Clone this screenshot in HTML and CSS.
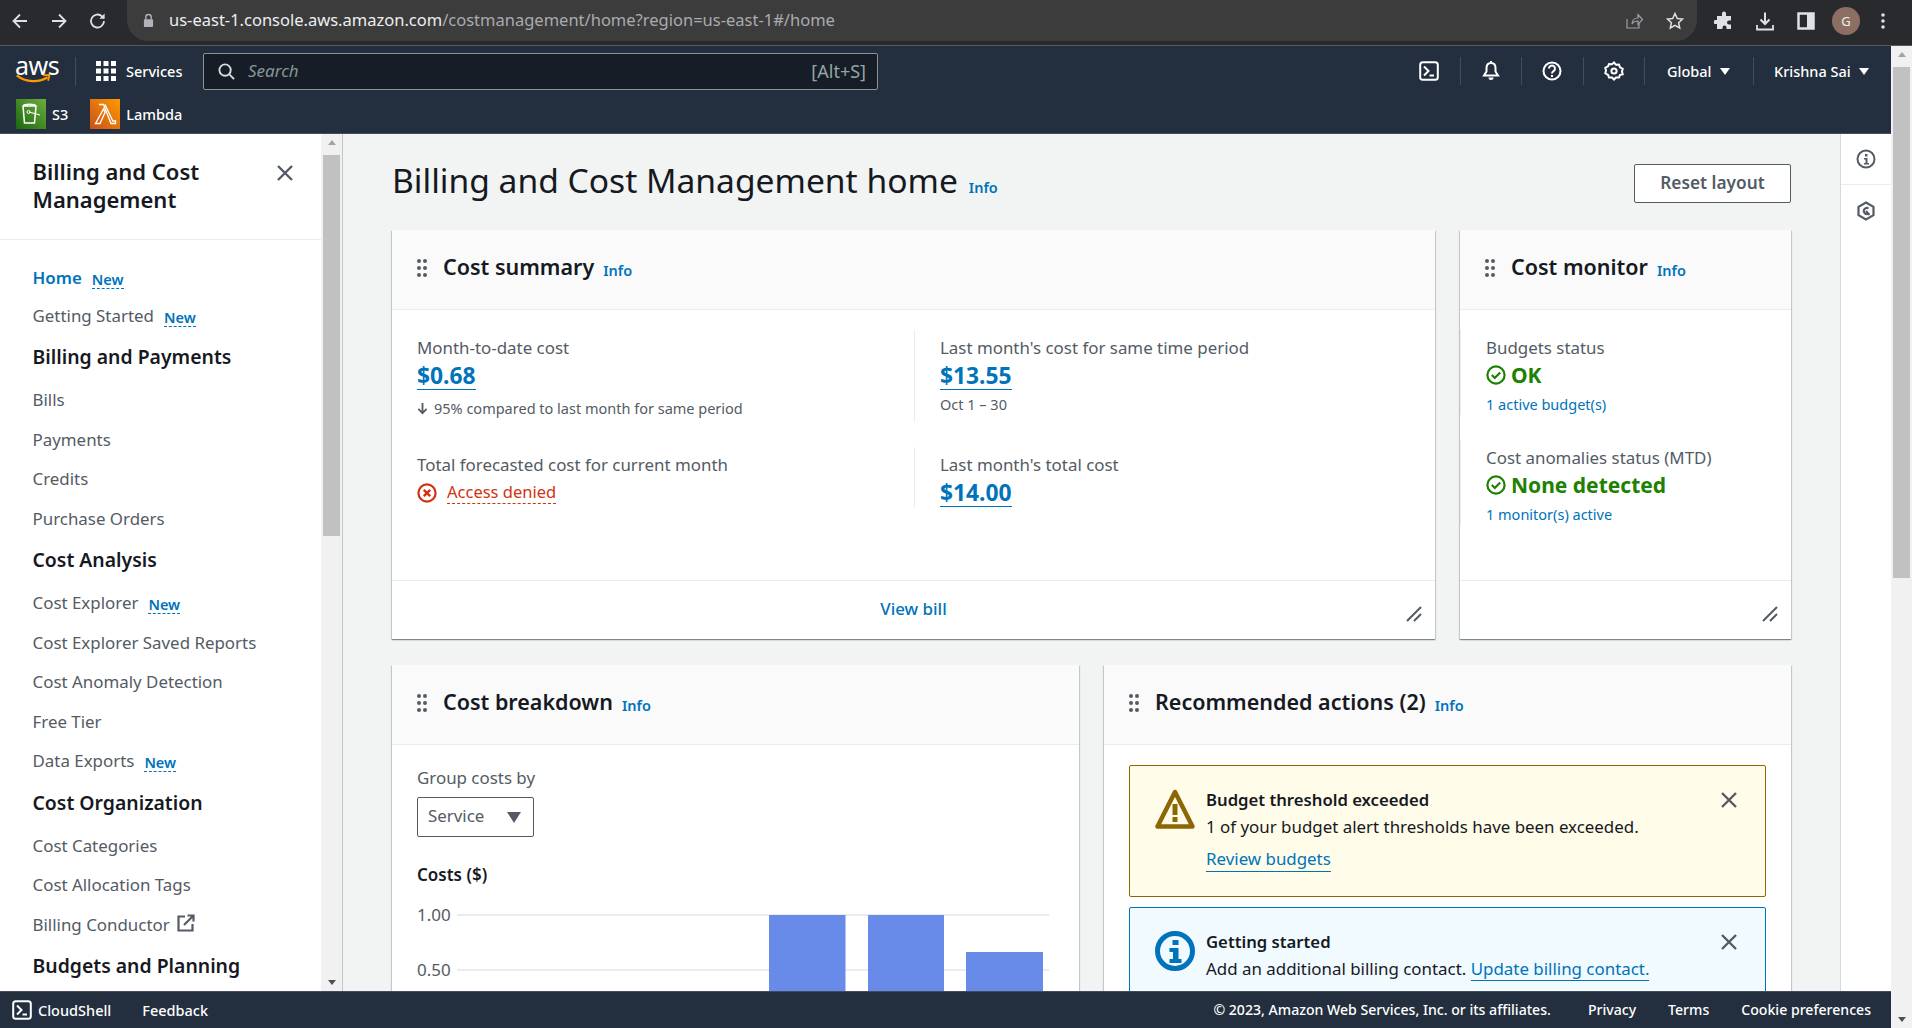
FILE: index.html
```html
<!DOCTYPE html>
<html lang="en">
<head>
<meta charset="utf-8">
<title>Billing and Cost Management home</title>
<link rel="stylesheet" href="styles.css">
</head>
<body>
<svg class="sprite" aria-hidden="true">
  <symbol id="i-shell" viewBox="0 0 20 20"><rect x="1.2" y="1.2" width="17.6" height="17.6" rx="2.5" fill="none" stroke="currentColor" stroke-width="2"/><path d="M5 5.5l4.5 4.5L5 14.5" fill="none" stroke="currentColor" stroke-width="2"/><path d="M10.5 14.5h4.5" stroke="currentColor" stroke-width="2"/></symbol>
  <symbol id="i-grip" viewBox="0 0 10 18"><g fill="currentColor"><circle cx="2" cy="2" r="2"/><circle cx="8" cy="2" r="2"/><circle cx="2" cy="9" r="2"/><circle cx="8" cy="9" r="2"/><circle cx="2" cy="16" r="2"/><circle cx="8" cy="16" r="2"/></g></symbol>
  <symbol id="i-close" viewBox="0 0 18 18"><path d="M2 2l14 14M16 2L2 16" fill="none" stroke="currentColor" stroke-width="2.4"/></symbol>
  <symbol id="i-check" viewBox="0 0 20 20"><circle cx="10" cy="10" r="8.6" fill="none" stroke="currentColor" stroke-width="2.2"/><path d="M5.8 10l3 3 5.4-5.6" fill="none" stroke="currentColor" stroke-width="2.2"/></symbol>
  <symbol id="i-resize" viewBox="0 0 16 16"><path d="M1 15L15 1M8 15l7-7" fill="none" stroke="currentColor" stroke-width="2"/></symbol>
</svg>

<div class="window">
  <header class="chrome">
    <div class="chrome-nav">
      <svg class="c-ic" viewBox="0 0 20 20"><path d="M17 10H4M10 3.5L3.5 10l6.5 6.5" fill="none" stroke="currentColor" stroke-width="1.8"/></svg>
      <svg class="c-ic" viewBox="0 0 20 20"><path d="M3 10h13M10 3.5l6.5 6.5-6.5 6.5" fill="none" stroke="currentColor" stroke-width="1.8"/></svg>
      <svg class="c-ic" viewBox="0 0 20 20"><path d="M16 10a6.5 6.5 0 1 1-2-4.7L16 7.2" fill="none" stroke="currentColor" stroke-width="1.8"/><path d="M16.6 2.6v5.2h-5.2z" fill="currentColor"/></svg>
    </div>
    <div class="omnibox">
      <svg class="lock" viewBox="0 0 12 16"><path d="M3 7V4.5a3 3 0 0 1 6 0V7" fill="none" stroke="currentColor" stroke-width="1.5"/><rect x="1" y="6.5" width="10" height="8.5" rx="1" fill="currentColor"/></svg>
      <span class="url"><span class="url-host">us-east-1.console.aws.amazon.com</span>/costmanagement/home?region=us-east-1#/home</span>
      <span class="omni-actions">
        <svg class="c-ic dim" viewBox="0 0 20 20"><path d="M3 8v9h12v-4M8 13c0-4 3-6 6-6V3.500l4.500 5-4.500 5V10c-3 0-5 1-6 3z" fill="none" stroke="currentColor" stroke-width="1.2"/></svg>
        <svg class="c-ic" viewBox="0 0 20 20"><path d="M10 2.500l2.300 5 5.200.6-3.900 3.600 1.100 5.300-4.700-2.700-4.700 2.700 1.100-5.300-3.900-3.600 5.200-.6z" fill="none" stroke="currentColor" stroke-width="1.5"/></svg>
      </span>
    </div>
    <div class="chrome-tools">
      <svg class="c-ic" viewBox="0 0 20 20"><path d="M8 2.500a2 2 0 0 1 4 0V5h5v4.500h-2a2 2 0 0 0 0 4h2V18h-4.500v-1.500a2 2 0 0 0-4 0V18H3v-5H1.500a2 2 0 0 1 0-4H3V5h5z" fill="currentColor"/></svg>
      <svg class="c-ic" viewBox="0 0 20 20"><path d="M10 1.500v11M5.500 8.500l4.500 4.500 4.500-4.500" fill="none" stroke="currentColor" stroke-width="2"/><path d="M2 14v4.500h16V14" fill="none" stroke="currentColor" stroke-width="1.8"/></svg>
      <svg class="c-ic" viewBox="0 0 20 20"><rect x="2.500" y="2.500" width="15" height="15" fill="none" stroke="currentColor" stroke-width="2.500"/><rect x="11" y="2.500" width="6.500" height="15" fill="currentColor"/></svg>
      <span class="avatar">G</span>
      <svg class="c-ic dots" viewBox="0 0 6 20"><g fill="currentColor"><circle cx="3" cy="4" r="1.8"/><circle cx="3" cy="10" r="1.8"/><circle cx="3" cy="16" r="1.8"/></g></svg>
    </div>
  </header>

  <div class="viewport">
    <div class="app">
      <nav class="topnav">
        <div class="topnav-row">
          <a class="logo"><span class="logo-text">aws</span><svg class="smile" viewBox="0 0 40 11"><path d="M1 1.500c10 8 25 8 34 2" fill="none" stroke="#f90" stroke-width="2.500"/><path d="M30 1.500l7-.5-1.500 6.500" fill="none" stroke="#f90" stroke-width="2"/></svg></a>
          <span class="logo-sep"></span>
          <svg class="grid-ic" viewBox="0 0 20 20"><g fill="#fff"><rect width="5" height="5"/><rect x="7.500" width="5" height="5"/><rect x="15" width="5" height="5"/><rect y="7.500" width="5" height="5"/><rect x="7.500" y="7.500" width="5" height="5"/><rect x="15" y="7.500" width="5" height="5"/><rect y="15" width="5" height="5"/><rect x="7.500" y="15" width="5" height="5"/><rect x="15" y="15" width="5" height="5"/></g></svg>
          <span class="services">Services</span>
          <div class="search">
            <svg class="search-ic" viewBox="0 0 18 18"><circle cx="7.500" cy="7.500" r="6" fill="none" stroke="currentColor" stroke-width="2"/><path d="M12 12l5 5" stroke="currentColor" stroke-width="2"/></svg>
            <span class="search-text">Search</span>
            <span class="search-key">[Alt+S]</span>
          </div>
          <div class="topnav-right">
            <span class="tn-cell"><svg class="tn-ic"><use href="#i-shell"/></svg></span>
            <span class="tn-cell"><svg class="tn-ic" viewBox="0 0 20 20"><path d="M10 2c-3 0-4.500 2.300-4.500 5v3.500L3 14.500h14l-2.500-4V7c0-2.700-1.500-5-4.500-5z" fill="none" stroke="#fff" stroke-width="2"/><path d="M7.500 16.500a2.500 2.500 0 0 0 5 0z" fill="#fff"/><path d="M10 0v2" stroke="#fff" stroke-width="2"/></svg></span>
            <span class="tn-cell"><svg class="tn-ic" viewBox="0 0 20 20"><circle cx="10" cy="10" r="8.500" fill="none" stroke="#fff" stroke-width="2"/><path d="M7 7.500a3 3 0 1 1 4.500 2.600c-1 .6-1.500 1.200-1.500 2.400" fill="none" stroke="#fff" stroke-width="2"/><rect x="9" y="14" width="2" height="2" fill="#fff"/></svg></span>
            <span class="tn-cell"><svg class="tn-ic" viewBox="0 0 20 20"><path d="M10 1.500l2 2.300 3-.3 1 2.800 2.700 1.400-.7 2.800.7 2.800L15.900 14l-.9 2.500-3 0-2 2-2-2-3 0-.9-2.500-2.800-1.700.7-2.800-.7-2.800L4 5.300l1-2.300 3 .3z" fill="none" stroke="#fff" stroke-width="2"/><circle cx="10" cy="10" r="2.600" fill="none" stroke="#fff" stroke-width="2"/></svg></span>
            <span class="tn-menu">Global<i class="caret"></i></span>
            <span class="tn-menu tn-last">Krishna Sai<i class="caret"></i></span>
          </div>
        </div>
        <div class="topnav-row fav-row">
          <span class="tile tile-s3"><svg viewBox="0 0 30 30"><path d="M7 7h13l-1.500 17h-10zM7 7c1-2.500 12-2.500 13 0" fill="none" stroke="#fff" stroke-width="1.500"/><path d="M13 13l11 3" stroke="#fff" stroke-width="1.200"/><circle cx="12.500" cy="13" r="1.500" fill="none" stroke="#fff"/></svg></span>
          <span class="fav-label">S3</span>
          <span class="tile tile-lambda"><svg viewBox="0 0 30 30"><path d="M9 5.500h4.500l7.500 19h4.500v-2.500h-2.700L15 5.500M5.500 24.500h4.500l5-11-1.500-3.500z" fill="none" stroke="#fff" stroke-width="1.300"/></svg></span>
          <span class="fav-label fav-lambda">Lambda</span>
        </div>
      </nav>

      <div class="workspace">
        <aside class="sidebar">
          <div class="side-head">
            <h2>Billing and Cost Management</h2>
            <svg class="side-close"><use href="#i-close"/></svg>
          </div>
          <ul class="side-list">
            <li class="side-item short active">Home <a class="new">New</a></li>
            <li class="side-item short">Getting Started <a class="new">New</a></li>
            <li class="side-title">Billing and Payments</li>
            <li class="side-item">Bills</li>
            <li class="side-item">Payments</li>
            <li class="side-item">Credits</li>
            <li class="side-item">Purchase Orders</li>
            <li class="side-title">Cost Analysis</li>
            <li class="side-item">Cost Explorer <a class="new">New</a></li>
            <li class="side-item">Cost Explorer Saved Reports</li>
            <li class="side-item">Cost Anomaly Detection</li>
            <li class="side-item">Free Tier</li>
            <li class="side-item">Data Exports <a class="new">New</a></li>
            <li class="side-title">Cost Organization</li>
            <li class="side-item">Cost Categories</li>
            <li class="side-item">Cost Allocation Tags</li>
            <li class="side-item">Billing Conductor <svg class="ext" viewBox="0 0 18 18"><path d="M8 2.500H1.500v14h14V10" fill="none" stroke="currentColor" stroke-width="2.200"/><path d="M7 11L16 2M10.500 1.500h6v6" fill="none" stroke="currentColor" stroke-width="2.200"/></svg></li>
            <li class="side-title">Budgets and Planning</li>
          </ul>
        </aside>
        <div class="side-scroll">
          <i class="arrow-up"></i>
          <div class="side-thumb"></div>
          <i class="arrow-down"></i>
        </div>

        <main class="main">
          <div class="page-head">
            <h1>Billing and Cost Management home</h1>
            <a class="info info-page">Info</a>
            <button class="reset">Reset layout</button>
          </div>

          <div class="row row-top">
            <section class="card">
              <div class="card-head"><svg class="grip"><use href="#i-grip"/></svg><h3>Cost summary</h3><a class="info">Info</a></div>
              <div class="summary-body">
                <div class="metric m-tall">
                  <div class="label">Month-to-date cost</div>
                  <div class="value"><a>$0.68</a></div>
                  <div class="sub sub-drop"><svg class="down" viewBox="0 0 12 14"><path d="M6 1v11M1.500 7.500L6 12l4.500-4.500" fill="none" stroke="currentColor" stroke-width="2"/></svg>95% compared to last month for same period</div>
                </div>
                <div class="metric m-tall m-line">
                  <div class="label">Last month's cost for same time period</div>
                  <div class="value"><a>$13.55</a></div>
                  <div class="sub">Oct 1 – 30</div>
                </div>
                <div class="metric">
                  <div class="label">Total forecasted cost for current month</div>
                  <div class="denied"><svg class="x-ic" viewBox="0 0 20 20"><circle cx="10" cy="10" r="8.600" fill="none" stroke="currentColor" stroke-width="2.200"/><path d="M6.800 6.800l6.400 6.400M13.200 6.800l-6.400 6.400" stroke="currentColor" stroke-width="2.400"/></svg><a>Access denied</a></div>
                </div>
                <div class="metric m-line">
                  <div class="label">Last month's total cost</div>
                  <div class="value"><a>$14.00</a></div>
                </div>
              </div>
              <div class="card-foot"><a class="view-bill">View bill</a><svg class="resize"><use href="#i-resize"/></svg></div>
            </section>

            <section class="card">
              <div class="card-head"><svg class="grip"><use href="#i-grip"/></svg><h3>Cost monitor</h3><a class="info">Info</a></div>
              <div class="monitor-body">
                <div class="mon">
                  <div class="label">Budgets status</div>
                  <div class="status"><svg class="ok-ic"><use href="#i-check"/></svg>OK</div>
                  <a class="sub-link">1 active budget(s)</a>
                </div>
                <div class="mon">
                  <div class="label">Cost anomalies status (MTD)</div>
                  <div class="status"><svg class="ok-ic"><use href="#i-check"/></svg>None detected</div>
                  <a class="sub-link">1 monitor(s) active</a>
                </div>
              </div>
              <div class="card-foot"><svg class="resize"><use href="#i-resize"/></svg></div>
            </section>
          </div>

          <div class="row row-bottom">
            <section class="card">
              <div class="card-head"><svg class="grip"><use href="#i-grip"/></svg><h3>Cost breakdown</h3><a class="info">Info</a></div>
              <div class="breakdown-body">
                <div class="label">Group costs by</div>
                <div class="select"><span class="select-value">Service</span><i class="select-caret"></i></div>
                <div class="chart-title">Costs ($)</div>
                <svg class="chart" viewBox="0 0 640 110">
                  <line x1="40" x2="632" y1="15" y2="15" class="grid-line"/>
                  <line x1="40" x2="632" y1="70" y2="70" class="grid-line"/>
                  <text x="0" y="21" class="axis">1.00</text>
                  <text x="0" y="76" class="axis">0.50</text>
                  <rect x="352" y="15" width="76.500" height="100" class="bar"/>
                  <rect x="451" y="15" width="76" height="100" class="bar"/>
                  <rect x="549" y="52" width="77" height="63" class="bar"/>
                </svg>
              </div>
            </section>

            <section class="card">
              <div class="card-head"><svg class="grip"><use href="#i-grip"/></svg><h3>Recommended actions (2)</h3><a class="info">Info</a></div>
              <div class="actions-body">
                <div class="alert alert-warn">
                  <svg class="alert-ic" viewBox="0 0 40 40"><path d="M20 3L2.500 37.500h35z" fill="none" stroke="#8d6605" stroke-width="4.500" stroke-linejoin="round"/><rect x="17.500" y="15" width="5" height="11" fill="#8d6605"/><rect x="17.500" y="28" width="5" height="5" fill="#8d6605"/></svg>
                  <div class="alert-text">
                    <div class="alert-title">Budget threshold exceeded</div>
                    <div class="alert-body">1 of your budget alert thresholds have been exceeded.</div>
                    <a class="alert-link">Review budgets</a>
                  </div>
                  <svg class="alert-close"><use href="#i-close"/></svg>
                </div>
                <div class="alert alert-info">
                  <svg class="alert-ic" viewBox="0 0 40 40"><circle cx="20" cy="20" r="17.500" fill="none" stroke="#0073bb" stroke-width="5"/><rect x="17.500" y="9" width="6" height="5" fill="#0073bb"/><path d="M14.500 17h9v11h3v4h-12v-4h3.500v-7h-3.500z" fill="#0073bb"/></svg>
                  <div class="alert-text">
                    <div class="alert-title">Getting started</div>
                    <div class="alert-body">Add an additional billing contact. <a class="alert-link-inline">Update billing contact.</a></div>
                  </div>
                  <svg class="alert-close"><use href="#i-close"/></svg>
                </div>
              </div>
            </section>
          </div>
        </main>

        <aside class="rail">
          <div class="rail-cell">
            <svg class="rail-ic" viewBox="0 0 20 20"><circle cx="10" cy="10" r="8.500" fill="none" stroke="currentColor" stroke-width="2"/><rect x="9" y="5" width="2.500" height="2.500" fill="currentColor"/><path d="M8 9h3.500v5H13v1.500H8V14h1.500v-3.500H8z" fill="currentColor"/></svg>
          </div>
          <div class="rail-cell">
            <svg class="rail-ic" viewBox="0 0 20 20"><path d="M10 1.500l7.500 4.300v8.400L10 18.500l-7.500-4.300V5.800z" fill="none" stroke="currentColor" stroke-width="2.200"/><path d="M12.500 7.500a3 3 0 1 0 0 5" fill="none" stroke="currentColor" stroke-width="2"/><path d="M10 10l3.500 4" stroke="currentColor" stroke-width="2"/></svg>
          </div>
        </aside>
      </div>

      <footer class="footer">
        <svg class="foot-shell"><use href="#i-shell"/></svg>
        <span class="foot-shell-label">CloudShell</span>
        <span class="foot-feedback">Feedback</span>
        <span class="foot-right">
          <span class="foot-copy">© 2023, Amazon Web Services, Inc. or its affiliates.</span>
          <span>Privacy</span>
          <span>Terms</span>
          <span>Cookie preferences</span>
        </span>
      </footer>
    </div>

    <div class="page-scroll">
      <i class="arrow-up"></i>
      <div class="page-thumb"></div>
      <i class="arrow-down"></i>
    </div>
  </div>
</div>
</body>
</html>
```

FILE: styles.css
```css
* { box-sizing: border-box; }
html, body { margin: 0; height: 100%; overflow: hidden; }
body { font-family: "Noto Sans", "Open Sans", sans-serif; font-size: 16.9px; line-height: 26px; color: #545b64; background: #f2f3f3; }
h1, h2, h3, ul { margin: 0; padding: 0; font-weight: inherit; }
li { list-style: none; }
svg { display: block; flex: none; }
.sprite { display: none; }
a { color: #0073bb; }

.window { height: 1028px; display: flex; flex-direction: column; }

/* browser */
.chrome { height: 46px; flex: none; background: #292a2d; border-bottom: 1px solid #5a5a5a; display: flex; color: #dfe1e5; }
.chrome-nav { width: 127px; display: flex; align-items: center; height: 41px; padding-left: 10px; gap: 19px; flex: none; }
.c-ic { width: 20px; height: 20px; color: #dfe1e5; }
.c-ic.dim { color: #9aa0a6; }
.omnibox { width: 1570px; height: 41px; background: #3c3c3c; border-radius: 0 0 21px 21px; display: flex; align-items: center; padding-left: 16px; flex: none; }
.lock { width: 11px; height: 15px; color: #b0b3b8; margin-right: 15px; }
.url { font-size: 16.5px; color: #a8abaf; white-space: nowrap; margin-top: -2px; }
.url-host { color: #eceef0; }
.omni-actions { margin-left: auto; display: flex; gap: 21px; padding-right: 12px; align-items: center; }
.chrome-tools { flex: 1; display: flex; align-items: center; height: 41px; padding-left: 17px; }
.chrome-tools .c-ic { margin-right: 21px; }
.chrome-tools .dots { width: 6px; height: 20px; margin: 0 0 0 20px; }
.avatar { width: 28px; height: 28px; border-radius: 50%; background: #8d6e63; color: #eee; font-size: 13px; line-height: 28px; text-align: center; flex: none; margin-left: -5px; }

.viewport { flex: 1; min-height: 0; display: flex; }
.app { width: 1891px; flex: none; display: flex; flex-direction: column; min-height: 0; }

/* top nav */
.topnav { height: 88px; flex: none; background: #232f3e; border-bottom: 1px solid #414d5c; color: #fff; font-size: 14.5px; }
.topnav-row { height: 50px; display: flex; align-items: center; padding-left: 15px; }
.logo { width: 38px; height: 28px; display: block; flex: none; margin-top: -2px; }
.logo-text { display: block; font-family: "Noto Sans", sans-serif; font-size: 25px; line-height: 18px; color: #fff; letter-spacing: -.5px; }
.smile { width: 38px; height: 10px; }
.logo-sep { width: 1px; height: 29px; background: #414d5c; margin-left: 22px; flex: none; }
.grid-ic { width: 20px; height: 20px; margin-left: 20px; }
.services { margin-left: 10px; font-weight: 500; width: 56px; white-space: nowrap; }
.search { width: 675px; height: 37px; margin-left: 21px; background: #161d26; border: 1px solid #879596; border-radius: 2px; display: flex; align-items: center; padding-left: 14px; padding-right: 11px; color: #d5dbdb; flex: none; }
.search-ic { width: 17px; height: 17px; }
.search-text { margin-left: 13px; font-style: italic; color: #879596; font-size: 17px; }
.search-key { margin-left: auto; color: #95a5a6; font-size: 18px; }
.topnav-right { margin-left: auto; display: flex; align-items: center; }
.tn-cell { width: 61.5px; height: 28px; border-right: 1px solid #414d5c; display: flex; justify-content: center; align-items: center; }
.tn-ic { width: 20px; height: 20px; color: #fff; }
.tn-menu { height: 28px; display: flex; align-items: center; padding-left: 22px; width: 109px; border-right: 1px solid #414d5c; white-space: nowrap; font-weight: 500; }
.tn-last { width: 137px; border-right: 0; padding-left: 20px; }
.caret { width: 0; height: 0; border-left: 5.5px solid transparent; border-right: 5.5px solid transparent; border-top: 7px solid #fff; margin-left: 8px; }
.fav-row { height: 37px; padding-left: 16px; padding-bottom: 1px; }
.tile { width: 30px; height: 30px; display: block; flex: none; }
.tile-s3 { background: linear-gradient(45deg, #1b660f, #6cae3e); }
.tile-lambda { background: linear-gradient(45deg, #c8511b, #f90); margin-left: 22px; }
.fav-label { margin-left: 6px; font-weight: 500; margin-top: -1px; }
.fav-lambda { margin-left: 6px; }

/* workspace */
.workspace { flex: 1; min-height: 0; display: flex; overflow: hidden; }
.sidebar { width: 321px; flex: none; background: #fff; overflow: hidden; }
.side-head { height: 106px; border-bottom: 1px solid #eaeded; padding: 22.5px 0 0 32.5px; display: flex; }
.side-head h2 { width: 220px; font-size: 22px; line-height: 28px; font-weight: 600; color: #16191f; }
.side-close { width: 18px; height: 18px; color: #545b64; margin: 7px 0 0 23px; }
.side-list { padding: 18.5px 0 0 32.5px; }
.side-item { height: 39.5px; display: flex; align-items: center; white-space: nowrap; gap: 10px; }
.side-item.short { height: 38.5px; }
.side-item.active { color: #0073bb; font-weight: 600; }
.side-title { height: 43.5px; margin-bottom: 1.5px; display: flex; align-items: center; font-size: 19.4px; font-weight: 600; color: #16191f; }
.new { font-size: 14.5px; font-weight: 600; color: #0073bb; line-height: 18px; border-bottom: 1px dashed #0073bb; margin-top: 3px; }
.ext { width: 18px; height: 18px; color: #545b64; margin-left: -3px; margin-top: -3px; }
.side-scroll { width: 22px; flex: none; background: #f1f1f1; border-right: 1px solid #c4c7c9; position: relative; padding: 21px 2px 0; }
.side-thumb { height: 381px; background: #c1c1c1; }
.arrow-up, .arrow-down { position: absolute; left: 50%; margin-left: -4px; width: 0; height: 0; border-left: 4px solid transparent; border-right: 4px solid transparent; }
.arrow-up { top: 6px; border-bottom: 5px solid #a3a3a3; }
.arrow-down { bottom: 6px; border-top: 5px solid #505050; }

/* main */
.main { flex: 1; min-width: 0; padding: 0 49px; overflow: hidden; background: #f2f3f3; }
.page-head { height: 96px; display: flex; align-items: flex-start; padding-top: 25px; }
.page-head h1 { font-size: 33.6px; line-height: 42px; color: #16191f; white-space: nowrap; font-weight: 400; }
.info { font-size: 14.5px; font-weight: 600; color: #0073bb; line-height: 20px; margin-left: 11px; }
.info-page { margin-top: 18px; }
.reset { margin-left: auto; margin-top: 5px; width: 157px; height: 39px; background: #fff; border: 1px solid #545b64; border-radius: 2px; font: 600 17.3px/24px "Noto Sans", sans-serif; color: #545b64; padding: 0 0 2px; }
.row { display: grid; }
.row-top { grid-template-columns: 1043px 331px; gap: 25px; height: 409px; }
.row-bottom { grid-template-columns: 687px 687px; gap: 25px; margin-top: 26px; height: 500px; }
.card { background: #fff; box-shadow: 0 1px 1px 0 rgba(0,28,36,.3), 1px 1px 1px 0 rgba(0,28,36,.15), -1px 1px 1px 0 rgba(0,28,36,.15); display: flex; flex-direction: column; position: relative; }
.card-head { height: 80px; flex: none; background: #fafafa; border-bottom: 1px solid #eaeded; display: flex; align-items: center; padding: 0 0 4px 25px; }
.grip { width: 10px; height: 18px; color: #545b64; margin-right: 16px; }
.card-head h3 { font-size: 21.5px; font-weight: 600; color: #16191f; line-height: 28px; white-space: nowrap; margin-top: -2px; }
.card-head .info { margin-left: 9px; margin-top: 4px; }

.summary-body { flex: 1; display: grid; grid-template-columns: 522px 1fr; grid-template-rows: 92px 60px; row-gap: 25px; padding-top: 20px; align-content: start; }
.metric { padding: 5px 0 0 25px; }
.m-line { border-left: 1px solid #eaeded; }
.label { white-space: nowrap; }
.value { font-size: 22.8px; font-weight: 700; line-height: 27px; margin-top: 1px; }
.value a { border-bottom: 1.5px solid #0073bb; display: inline-block; line-height: 26px; }
.sub { font-size: 14.5px; line-height: 20px; margin-top: 4px; }
.sub-drop { margin-top: 8px; display: flex; align-items: center; gap: 6px; white-space: nowrap; }
.m-tall .sub { white-space: nowrap; }
.down { width: 11px; height: 13px; }
.denied { display: flex; align-items: center; gap: 10px; margin-top: 3px; color: #d13212; font-size: 16.5px; }
.denied a { color: #d13212; border-bottom: 1px dashed #d13212; line-height: 22px; }
.x-ic { width: 20px; height: 20px; }
.card-foot { height: 59px; flex: none; border-top: 1px solid #eaeded; display: flex; align-items: center; justify-content: center; padding-bottom: 2px; }
.view-bill { font-weight: 500; }
.resize { position: absolute; right: 13px; bottom: 17px; width: 16px; height: 16px; color: #545b64; }

.monitor-body { flex: 1; padding-top: 20px; display: flex; flex-direction: column; gap: 25px; }
.mon { height: 85px; border-left: 1px solid #eaeded; padding: 5px 0 0 25px; }
.status { display: flex; align-items: center; gap: 5px; font-size: 21px; line-height: 28px; font-weight: 700; color: #1d8102; white-space: nowrap; }
.ok-ic { width: 20px; height: 20px; color: #1d8102; }
.sub-link { display: block; font-size: 14.5px; line-height: 20px; margin-top: 5px; }

.breakdown-body { padding: 20px 0 0 25px; }
.select { width: 117px; height: 40px; border: 1px solid #545b64; border-radius: 2px; margin-top: 6px; display: flex; align-items: center; justify-content: space-between; padding: 0 12px 0 10px; }
.select-value { margin-top: -3px; }
.select-caret { width: 0; height: 0; border-left: 7px solid transparent; border-right: 7px solid transparent; border-top: 11px solid #545b64; }
.chart-title { font-weight: 600; color: #16191f; margin-top: 25px; font-size: 17px; }
.chart { width: 640px; height: 110px; margin-top: 12px; overflow: visible; }
.grid-line { stroke: #eaeded; stroke-width: 2; }
.axis { font-family: "Noto Sans", sans-serif; font-size: 17px; fill: #545b64; }
.bar { fill: #688ae8; }

.actions-body { padding: 20px 25px 0; display: flex; flex-direction: column; gap: 10px; }
.alert { border: 1px solid; border-radius: 2px; height: 132px; padding: 21px 20px 0 25px; display: flex; flex: none; color: #16191f; }
.alert-warn { background: #fffce9; border-color: #8d6605; }
.alert-info { background: #f1faff; border-color: #0073bb; height: 140px; }
.alert-ic { width: 40px; height: 40px; margin-top: 2px; }
.alert-text { margin-left: 11px; flex: 1; white-space: nowrap; }
.alert-title { font-weight: 600; font-size: 16.7px; }
.alert-body { margin-top: 1px; }
.alert-link { display: inline-block; margin-top: 7px; border-bottom: 1px solid #0073bb; line-height: 24px; }
.alert-link-inline { border-bottom: 1px solid #0073bb; }
.alert-close { width: 18px; height: 18px; color: #545b64; margin: 4px 7px 0 0; }

.rail { width: 51px; flex: none; background: #fff; border-left: 1px solid #d5dbdb; }
.rail-cell { height: 51px; display: flex; justify-content: center; align-items: center; border-bottom: 1px solid #eaeded; }
.rail-cell:last-child { border-bottom: 0; }
.rail-ic { width: 20px; height: 20px; color: #545b64; }

/* footer */
.footer { height: 37px; flex: none; background: #232f3e; border-top: 1px solid #414d5c; color: #fff; font-size: 14.1px; display: flex; align-items: center; padding: 0 20px 0 12px; font-weight: 500; white-space: nowrap; }
.foot-shell { width: 20px; height: 20px; color: #fff; }
.foot-shell-label { margin-left: 6px; font-size: 14.5px; }
.foot-feedback { margin-left: 31px; font-size: 14.5px; }
.foot-right { margin-left: auto; display: flex; gap: 32px; }
.foot-copy { margin-right: 5px; }

/* page scrollbar */
.page-scroll { width: 21px; flex: none; background: #f1f1f1; position: relative; padding-top: 21px; padding-left: 2px; }
.page-thumb { width: 17px; height: 511px; background: #c1c1c1; }
```
